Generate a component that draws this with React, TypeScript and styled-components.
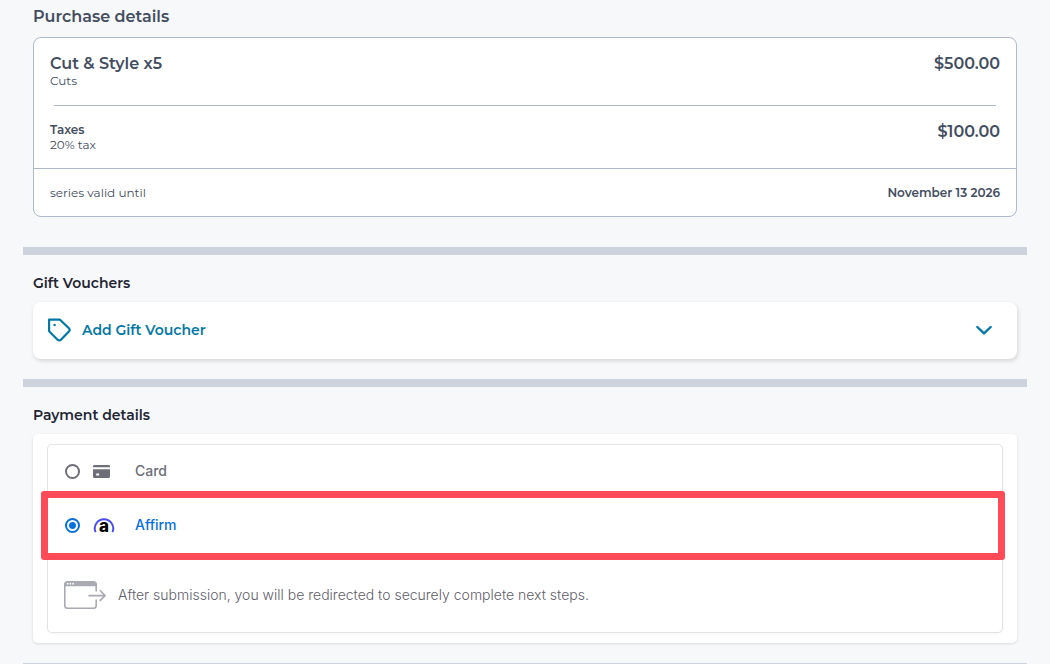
import React from "react";
import styled, { createGlobalStyle } from "styled-components";

const GlobalStyle = createGlobalStyle`
  *, *::before, *::after { box-sizing: border-box; }
  body {
    margin: 0;
    background: #f7f8fa;
    color: #434d60;
    font-family: Montserrat, Inter, "Liberation Sans", sans-serif;
  }
  h2, p { margin: 0; }
`;

const Page = styled.main`
  padding: 0 23px;
`;

const Section = styled.section<{ $top: number; $bottom: number }>`
  padding: ${({ $top }) => $top}px 10px ${({ $bottom }) => $bottom}px;
`;

const Separator = styled.hr<{ $thin?: boolean }>`
  height: ${({ $thin }) => ($thin ? 1 : 8)}px;
  margin: 0;
  border: 0;
  background: #ccd3dd;
`;

const Heading = styled.h2<{ $large?: boolean }>`
  color: ${({ $large }) => ($large ? "#434d60" : "#1f2533")};
  font-size: ${({ $large }) => ($large ? 16 : 14)}px;
  font-weight: 600;
  line-height: 20px;
`;

const Summary = styled.div`
  margin-top: 10px;
  border: 1px solid #aebaca;
  border-radius: 8px;
  background: #fff;
`;

const Items = styled.div`
  padding: 16px;
  border-bottom: 1px solid #aebaca;
`;

const ItemRow = styled.div`
  display: flex;
  justify-content: space-between;
  align-items: flex-start;
`;

const ItemRule = styled.hr`
  height: 1px;
  margin: 17px 4px 16px;
  border: 0;
  background: #aebaca;
`;

const ItemName = styled.p<{ $small?: boolean }>`
  font-size: ${({ $small }) => ($small ? 12 : 16)}px;
  font-weight: 600;
  line-height: ${({ $small }) => ($small ? 16 : 20)}px;
`;

const Note = styled.p`
  font-size: 12px;
  line-height: 14px;
`;

const Price = styled.p`
  font-size: 16px;
  font-weight: 600;
  line-height: 20px;
`;

const Validity = styled.div`
  display: flex;
  justify-content: space-between;
  padding: 17px 16px 16px;
`;

const ValidDate = styled(Note)`
  font-weight: 600;
`;

const VoucherButton = styled.button`
  display: flex;
  align-items: center;
  width: 100%;
  height: 57px;
  margin-top: 9px;
  padding: 0 24px 2px 14px;
  border: 0;
  border-radius: 8px;
  background: #fff;
  box-shadow: 1px 2px 4px rgba(0, 0, 0, 0.14);
  color: #0378a6;
  font: inherit;
  font-size: 14px;
  font-weight: 600;
  text-align: left;
  cursor: pointer;
`;

const VoucherLabel = styled.span`
  flex: 1;
  margin-left: 11px;
`;

const PaymentCard = styled.div`
  margin-top: 9px;
  padding: 10px 14px;
  border-radius: 5px;
  background: #fff;
  box-shadow: 0 1px 3px rgba(0, 0, 0, 0.12);
`;

const Methods = styled.div`
  border: 1px solid #e4e4e6;
  border-radius: 5px;
  background: #fff;
  box-shadow: 0 1px 3px rgba(0, 0, 0, 0.04);
  font-family: Inter, "Liberation Sans", sans-serif;
`;

const Option = styled.label<{ $active?: boolean }>`
  position: relative;
  display: flex;
  align-items: center;
  height: 54px;
  padding: 0 0 2px 17px;
  color: ${({ $active }) => ($active ? "#0570de" : "#6d6e78")};
  font-size: 14px;
  font-weight: 500;
  line-height: 18px;
  cursor: pointer;
`;

const Radio = styled.input`
  appearance: none;
  width: 15px;
  height: 15px;
  margin: 0;
  border: 2px solid #6d6e78;
  border-radius: 50%;
  background: #fff;

  &:checked {
    border-color: #0570de;
    background: radial-gradient(circle, #0570de 3px, #fff 4px);
  }
`;

const OptionIcon = styled.span`
  display: flex;
  width: 44px;
  margin-left: 11px;
`;

const Highlight = styled.span`
  position: absolute;
  inset: -8px -3px -7px -7px;
  border: 7px solid #ff4a58;
  border-radius: 3px;
  pointer-events: none;
`;

const Redirect = styled.div`
  display: flex;
  align-items: center;
  gap: 12px;
  height: 79px;
  padding: 4px 16px 0;
  color: #5f606b;
  font-size: 14px;
  font-weight: 300;
  line-height: 20px;
`;

const TagIcon = () => (
  <svg width="24" height="24" viewBox="0 0 24 24" fill="none" stroke="currentColor" strokeWidth="2.200" strokeLinejoin="round" aria-hidden="true">
    <path d="M2.100 1.700h10.300c.5 0 .9.2 1.200.5l8.300 8c1 1 1 2.100 0 3.200l-8 8.300c-1 1-2.300 1-3.300 0l-8-7.900a1.600 1.600 0 0 1-.5-1.200z" />
    <circle cx="7.600" cy="7" r="1.200" fill="currentColor" stroke="none" />
  </svg>
);

const ChevronIcon = () => (
  <svg width="18" height="12" viewBox="0 0 18 12" fill="none" stroke="currentColor" strokeWidth="2.400" strokeLinecap="round" strokeLinejoin="round" aria-hidden="true">
    <path d="M2.300 3 9 9.300l6.700-6.300" />
  </svg>
);

const CardIcon = () => (
  <svg width="22" height="16" viewBox="0 0 22 16" fill="#6d6e78" aria-hidden="true">
    <path d="M2 4.300V3.500c0-1 .7-1.500 1.500-1.500h14c.9 0 1.500.6 1.500 1.500v.8z" />
    <path fillRule="evenodd" d="M2 6.300h17v7.200c0 .9-.6 1.500-1.500 1.500h-14C2.600 15 2 14.400 2 13.500zM5.200 10.600v1.800h2.900v-1.800z" />
  </svg>
);

const AffirmLogo = styled.svg`
  overflow: visible;
`;

const AffirmIcon = () => (
  <AffirmLogo width="26" height="22" viewBox="0 0 26 22" aria-hidden="true">
    <path d="M4.600 18.200A9.200 9.200 0 1 1 21.400 18.200" fill="none" stroke="#4a4af4" strokeWidth="1.900" />
    <text x="13" y="18" textAnchor="middle" fontFamily="Inter, sans-serif" fontSize="17" fontWeight="800" fill="#000">a</text>
  </AffirmLogo>
);

const RedirectIcon = () => (
  <svg width="42" height="28" viewBox="0 0 42 28" fill="none" stroke="#a9aab2" strokeWidth="1.600" strokeLinecap="round" strokeLinejoin="round" aria-hidden="true">
    <path d="M32.200 10V3.500c0-1.600-1-2.700-2.700-2.700h-26C1.900.8.800 1.900.800 3.500v21c0 1.600 1.100 2.700 2.700 2.700h26c1.700 0 2.700-1.100 2.700-2.700V19" />
    <path d="M1 5V3.500C1 2 2 1 3.500 1h26C31 1 32 2 32 3.500V5z" fill="#a9aab2" stroke="none" />
    <path d="M1 4.400h31" />
    <path d="M25 14.600h16M36.300 9.800l4.800 4.800-4.800 4.800" />
    <g fill="#fff" stroke="none">
      <circle cx="3.700" cy="2.700" r=".9" />
      <circle cx="6.400" cy="2.700" r=".9" />
      <circle cx="9.100" cy="2.700" r=".9" />
    </g>
  </svg>
);

export default function App() {
  const [method, setMethod] = React.useState("affirm");

  return (
    <>
      <GlobalStyle />
      <Page>
        <Section $top={7} $bottom={30}>
          <Heading $large>Purchase details</Heading>
          <Summary>
            <Items>
              <ItemRow>
                <div>
                  <ItemName>Cut &amp; Style x5</ItemName>
                  <Note>Cuts</Note>
                </div>
                <Price>$500.00</Price>
              </ItemRow>
              <ItemRule />
              <ItemRow>
                <div>
                  <ItemName $small>Taxes</ItemName>
                  <Note>20% tax</Note>
                </div>
                <Price>$100.00</Price>
              </ItemRow>
            </Items>
            <Validity>
              <Note>series valid until</Note>
              <ValidDate>November 13 2026</ValidDate>
            </Validity>
          </Summary>
        </Section>
        <Separator />
        <Section $top={18} $bottom={20}>
          <Heading>Gift Vouchers</Heading>
          <VoucherButton type="button">
            <TagIcon />
            <VoucherLabel>Add Gift Voucher</VoucherLabel>
            <ChevronIcon />
          </VoucherButton>
        </Section>
        <Separator />
        <Section $top={18} $bottom={20}>
          <Heading>Payment details</Heading>
          <PaymentCard>
            <Methods>
              <Option $active={method === "card"}>
                <Radio type="radio" name="method" checked={method === "card"} onChange={() => setMethod("card")} />
                <OptionIcon><CardIcon /></OptionIcon>
                Card
              </Option>
              <Option $active={method === "affirm"}>
                <Radio type="radio" name="method" checked={method === "affirm"} onChange={() => setMethod("affirm")} />
                <OptionIcon><AffirmIcon /></OptionIcon>
                Affirm
                <Highlight />
              </Option>
              <Redirect>
                <RedirectIcon />
                <p>After submission, you will be redirected to securely complete next steps.</p>
              </Redirect>
            </Methods>
          </PaymentCard>
        </Section>
        <Separator $thin />
      </Page>
    </>
  );
}
